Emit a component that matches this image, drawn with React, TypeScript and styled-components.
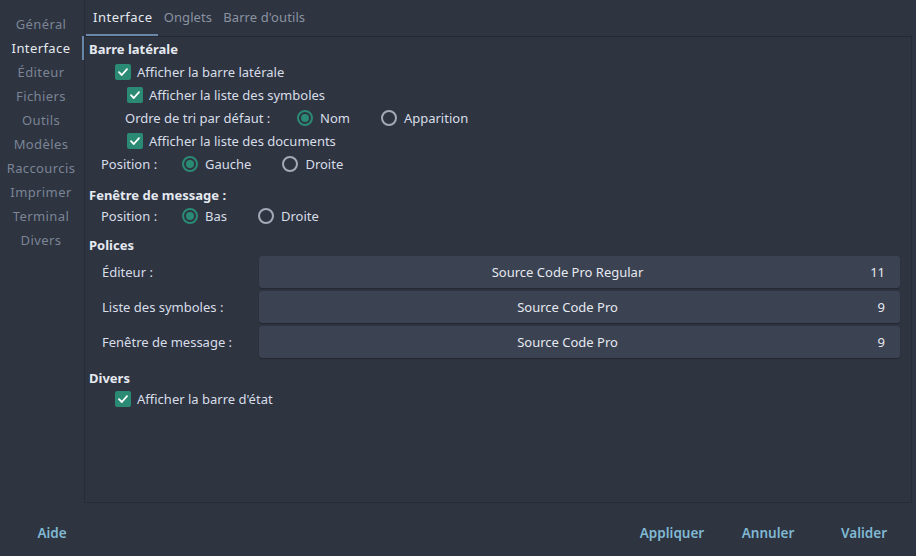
import styled, { createGlobalStyle } from "styled-components";

const GlobalStyle = createGlobalStyle`
    html, body {
        margin: 0;
        padding: 0;
        background: #2e3440;
    }
    body {
        font-family: "Noto Sans", "Open Sans", sans-serif;
        font-size: 13px;
        color: #d8dee9;
    }
`;

const Window = styled.div`
    width: 916px;
    height: 556px;
    display: grid;
    grid-template-columns: 84px 1fr;
    grid-template-rows: 503px 53px;
    background: #2e3440;
    overflow: hidden;
`;

const Sidebar = styled.nav`
    display: flex;
    flex-direction: column;
    padding-top: 12px;
`;

const SideItem = styled.div<{ $active?: boolean }>`
    height: 24px;
    line-height: 24px;
    text-align: center;
    letter-spacing: 0.4px;
    color: ${(p) => (p.$active ? "#e5e9f0" : "#7b8596")};
    border-right: 2px solid ${(p) => (p.$active ? "#6a86a8" : "transparent")};
    font-size: 13px;
`;

const Main = styled.div`
    display: flex;
    flex-direction: column;
    border-left: 1px solid #272c35;
    margin-right: 4px;
`;

const TabBar = styled.div`
    display: flex;
    height: 36px;
    padding-left: 1px;
`;

const Tab = styled.div<{ $active?: boolean }>`
    padding: 0 5px 0 ${(p) => (p.$active ? 7 : 6)}px;
    line-height: 34px;
    height: 34px;
    letter-spacing: ${(p) => (p.$active ? 0.5 : 0.1)}px;
    color: ${(p) => (p.$active ? "#e5e9f0" : "#8a93a2")};
    border-bottom: 2px solid ${(p) => (p.$active ? "#6a86a8" : "transparent")};
`;

const Panel = styled.div`
    flex: 1;
    border-top: 1px solid #252a32;
    border-right: 1px solid #272c35;
    border-bottom: 1px solid #272c35;
    padding: 1px 11px 0 4px;
    display: flex;
    flex-direction: column;
`;

const SectionTitle = styled.div<{ $top?: number }>`
    font-weight: 700;
    height: 22px;
    line-height: 22px;
    margin-top: ${(p) => p.$top ?? 0}px;
    color: #e5e9f0;
`;

const Row = styled.div<{ $indent: number; $h?: number }>`
    display: flex;
    align-items: center;
    height: ${(p) => p.$h ?? 23}px;
    padding-left: ${(p) => p.$indent}px;
    white-space: nowrap;
`;

const Box = styled.span`
    width: 16px;
    height: 16px;
    border-radius: 2px;
    background: #2a8a73;
    display: inline-flex;
    align-items: center;
    justify-content: center;
    margin-right: 6px;
    flex: none;
`;

const FieldLabel = styled.span<{ $w: number }>`
    width: ${(p) => p.$w}px;
    flex: none;
`;

const Option = styled.span`
    display: inline-flex;
    align-items: center;
    margin-right: 31px;
`;

const Radio = styled.span<{ $on?: boolean }>`
    width: 16px;
    height: 16px;
    box-sizing: border-box;
    border-radius: 50%;
    border: 2px solid ${(p) => (p.$on ? "#2a8a73" : "#a3abb7")};
    display: inline-flex;
    align-items: center;
    justify-content: center;
    margin-right: 7px;
    &::after {
        content: "";
        width: 8px;
        height: 8px;
        border-radius: 50%;
        background: ${(p) => (p.$on ? "#2a8a73" : "transparent")};
    }
`;

const FontRows = styled.div`
    display: flex;
    flex-direction: column;
    gap: 3px;
`;

const FontRow = styled.div`
    display: flex;
    align-items: center;
    height: 32px;
    padding-left: 13px;
`;

const FontButton = styled.div`
    flex: 1;
    height: 32px;
    box-sizing: border-box;
    padding-right: 24px;
    background: #3b4252;
    border-radius: 3px;
    box-shadow: 0 1px 1px rgba(0, 0, 0, 0.25);
    position: relative;
    display: flex;
    align-items: center;
    justify-content: center;
    color: #e5e9f0;
`;

const FontSize = styled.span`
    position: absolute;
    right: 15px;
`;

const Footer = styled.div`
    grid-column: 1 / 3;
    display: flex;
    align-items: center;
    padding: 7px 4px 0 4px;
`;

const FooterButton = styled.div`
    width: 96px;
    text-align: center;
    font-weight: 600;
    font-size: 13.5px;
    color: #81b9d4;
`;

const Spacer = styled.div`
    flex: 1;
`;

function Check() {
    return (
        <Box>
            <svg width="12" height="12" viewBox="0 0 12 12">
                <path d="M2 6.2 L4.8 9 L10 3.2" stroke="#fff" strokeWidth="1.8" fill="none" strokeLinecap="round" strokeLinejoin="round" />
            </svg>
        </Box>
    );
}

const sideItems = ["Général", "Interface", "Éditeur", "Fichiers", "Outils", "Modèles", "Raccourcis", "Imprimer", "Terminal", "Divers"];

const fonts = [
    { label: "Éditeur :", name: "Source Code Pro Regular", size: 11 },
    { label: "Liste des symboles :", name: "Source Code Pro", size: 9 },
    { label: "Fenêtre de message :", name: "Source Code Pro", size: 9 },
];

export default function App() {
    return (
        <>
            <GlobalStyle />
            <Window>
                <Sidebar>
                    {sideItems.map((item) => (
                        <SideItem key={item} $active={item === "Interface"}>
                            {item}
                        </SideItem>
                    ))}
                </Sidebar>
                <Main>
                    <TabBar>
                        <Tab $active>Interface</Tab>
                        <Tab>Onglets</Tab>
                        <Tab>Barre d'outils</Tab>
                    </TabBar>
                    <Panel>
                        <SectionTitle>Barre latérale</SectionTitle>
                        <Row $indent={26}>
                            <Check />
                            Afficher la barre latérale
                        </Row>
                        <Row $indent={38}>
                            <Check />
                            Afficher la liste des symboles
                        </Row>
                        <Row $indent={36}>
                            <FieldLabel $w={172}>Ordre de tri par défaut :</FieldLabel>
                            <Option>
                                <Radio $on />
                                Nom
                            </Option>
                            <Option>
                                <Radio />
                                Apparition
                            </Option>
                        </Row>
                        <Row $indent={38}>
                            <Check />
                            Afficher la liste des documents
                        </Row>
                        <Row $indent={12}>
                            <FieldLabel $w={81}>Position :</FieldLabel>
                            <Option>
                                <Radio $on />
                                Gauche
                            </Option>
                            <Option>
                                <Radio />
                                Droite
                            </Option>
                        </Row>

                        <SectionTitle $top={9}>Fenêtre de message :</SectionTitle>
                        <Row $indent={12} $h={20}>
                            <FieldLabel $w={81}>Position :</FieldLabel>
                            <Option>
                                <Radio $on />
                                Bas
                            </Option>
                            <Option>
                                <Radio />
                                Droite
                            </Option>
                        </Row>

                        <SectionTitle $top={8}>Polices</SectionTitle>
                        <FontRows>
                            {fonts.map((f) => (
                                <FontRow key={f.label}>
                                    <FieldLabel $w={157}>{f.label}</FieldLabel>
                                    <FontButton>
                                        {f.name}
                                        <FontSize>{f.size}</FontSize>
                                    </FontButton>
                                </FontRow>
                            ))}
                        </FontRows>

                        <SectionTitle $top={9}>Divers</SectionTitle>
                        <Row $indent={26} $h={20}>
                            <Check />
                            Afficher la barre d'état
                        </Row>
                    </Panel>
                </Main>
                <Footer>
                    <FooterButton>Aide</FooterButton>
                    <Spacer />
                    <FooterButton>Appliquer</FooterButton>
                    <FooterButton>Annuler</FooterButton>
                    <FooterButton>Valider</FooterButton>
                </Footer>
            </Window>
        </>
    );
}
